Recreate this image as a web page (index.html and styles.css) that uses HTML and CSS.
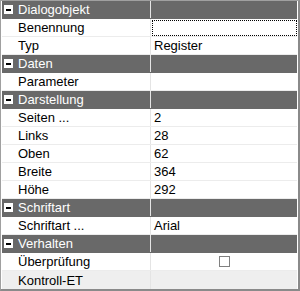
FILE: index.html
```html
<!DOCTYPE html>
<html>
<head>
<meta charset="utf-8">
<link rel="stylesheet" href="styles.css">
</head>
<body>
<div class="grid">
  <div class="row cat"><div class="name"><span class="tog"></span>Dialogobjekt</div><div class="val"></div></div>
  <div class="row"><div class="name">Benennung</div><div class="val"><span class="focus"></span></div></div>
  <div class="row"><div class="name">Typ</div><div class="val">Register</div></div>
  <div class="row cat"><div class="name"><span class="tog"></span>Daten</div><div class="val"></div></div>
  <div class="row"><div class="name">Parameter</div><div class="val"></div></div>
  <div class="row cat"><div class="name"><span class="tog"></span>Darstellung</div><div class="val"></div></div>
  <div class="row"><div class="name">Seiten ...</div><div class="val">2</div></div>
  <div class="row"><div class="name">Links</div><div class="val">28</div></div>
  <div class="row"><div class="name">Oben</div><div class="val">62</div></div>
  <div class="row"><div class="name">Breite</div><div class="val">364</div></div>
  <div class="row"><div class="name">Höhe</div><div class="val">292</div></div>
  <div class="row cat"><div class="name"><span class="tog"></span>Schriftart</div><div class="val"></div></div>
  <div class="row"><div class="name">Schriftart ...</div><div class="val">Arial</div></div>
  <div class="row cat"><div class="name"><span class="tog"></span>Verhalten</div><div class="val"></div></div>
  <div class="row"><div class="name">Überprüfung</div><div class="val center"><span class="check"></span></div></div>
  <div class="row sel"><div class="name">Kontroll-ET</div><div class="val"></div></div>
</div>
</body>
</html>
```
FILE: styles.css
```css
html, body {
  margin: 0;
  padding: 0;
  background: #ffffff;
}
.grid {
  width: 300px;
  height: 291px;
  box-sizing: border-box;
  border-top: 1px solid #a0a0a0;
  border-left: 1px solid #a0a0a0;
  border-right: 2px solid #8a8a8a;
  border-bottom: 2px solid #8a8a8a;
  padding: 0 1px 0 1px;
  background: #ffffff;
  font-family: "Liberation Sans", Arial, sans-serif;
  font-size: 13px;
  color: #000;
  overflow: hidden;
}
.row {
  display: flex;
  height: 18px;
  box-sizing: border-box;
  border-bottom: 1px solid #ececec;
  background: #ffffff;
}
.name {
  width: 149px;
  box-sizing: border-box;
  padding-left: 16px;
  line-height: 17px;
  border-right: 1px solid #e4e4e4;
  display: flex;
  align-items: center;
  white-space: nowrap;
}
.val {
  flex: 1;
  position: relative;
  padding-left: 3px;
  line-height: 17px;
  white-space: nowrap;
}
.val.center {
  display: flex;
  justify-content: center;
  align-items: center;
  padding-left: 0;
}
.cat {
  background: #696969;
  color: #ffffff;
  border-bottom-color: #696969;
}
.cat .name {
  padding-left: 2px;
  border-right-color: #e4e4e4;
}
.tog {
  width: 9px;
  height: 9px;
  background: #ffffff;
  margin-right: 5px;
  position: relative;
  flex: none;
}
.tog::after {
  content: "";
  position: absolute;
  left: 2px;
  top: 4px;
  width: 5px;
  height: 2px;
  background: #000;
}
.sel {
  background: #efefef;
  border-bottom: none;
}
.focus {
  position: absolute;
  left: 1px;
  right: 0;
  top: 1px;
  bottom: 0;
  border: 1px dotted #000;
}
.check {
  width: 11px;
  height: 11px;
  box-sizing: border-box;
  border: 1px solid #808080;
  background: #fff;
}
```
